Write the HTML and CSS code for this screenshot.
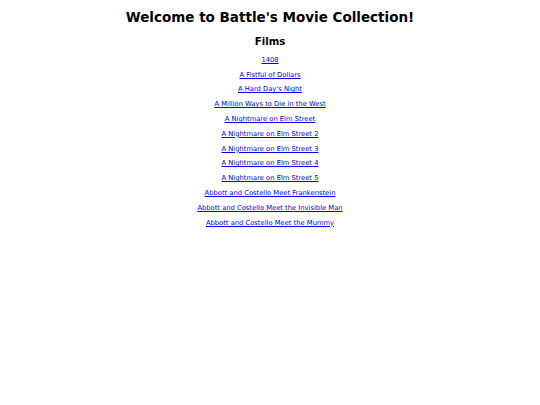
FILE: index.html
```html
<!DOCTYPE html>
<html>
<head>
<meta charset="utf-8">
<link rel="stylesheet" href="styles.css">
</head>
<body>
<div class="page">
  <h1 class="title">Welcome to Battle's Movie Collection!</h1>
  <h2 class="subtitle">Films</h2>
  <ul class="films">
    <li><a href="#">1408</a></li>
    <li><a href="#">A Fistful of Dollars</a></li>
    <li><a href="#">A Hard Day's Night</a></li>
    <li><a href="#">A Million Ways to Die in the West</a></li>
    <li><a href="#">A Nightmare on Elm Street</a></li>
    <li><a href="#">A Nightmare on Elm Street 2</a></li>
    <li><a href="#">A Nightmare on Elm Street 3</a></li>
    <li><a href="#">A Nightmare on Elm Street 4</a></li>
    <li><a href="#">A Nightmare on Elm Street 5</a></li>
    <li><a href="#">Abbott and Costello Meet Frankenstein</a></li>
    <li><a href="#">Abbott and Costello Meet the Invisible Man</a></li>
    <li><a href="#">Abbott and Costello Meet the Mummy</a></li>
  </ul>
</div>
</body>
</html>
```
FILE: styles.css
```css
html, body {
  margin: 0;
  padding: 0;
  background: #ffffff;
}
body {
  font-family: "DejaVu Sans", Verdana, sans-serif;
  color: #000000;
}
.page {
  padding-top: 10px;
  text-align: center;
}
.title {
  margin: 0 0 10.4px 0;
  font-size: 13.5px;
  line-height: 15.7px;
  font-weight: bold;
}
.subtitle {
  margin: 0 0 8.9px 0;
  font-size: 10.125px;
  line-height: 11.8px;
  font-weight: bold;
}
.films {
  list-style: none;
  margin: 0;
  padding: 0;
}
.films li {
  font-size: 6.75px;
  line-height: 7.86px;
  margin-bottom: 6.95px;
}
.films a {
  color: #0000ee;
  text-decoration: underline;
}
```
